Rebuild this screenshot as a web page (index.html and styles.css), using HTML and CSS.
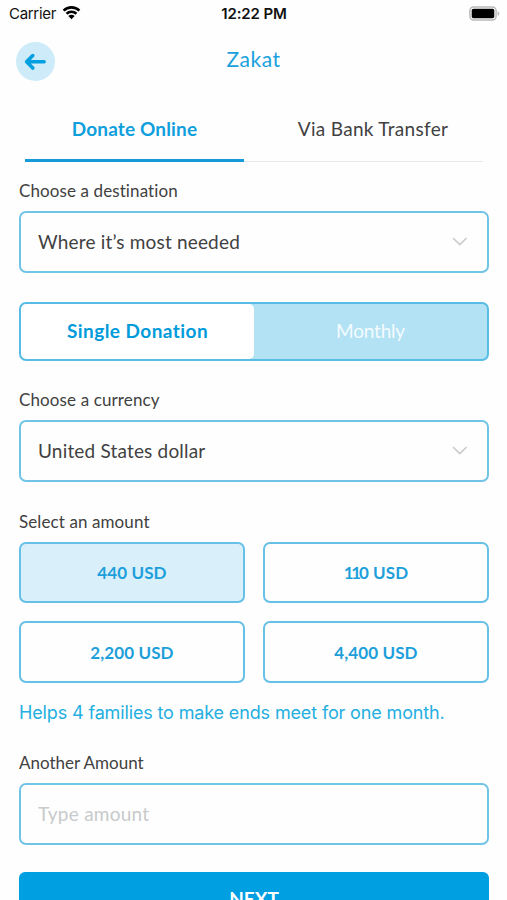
FILE: index.html
```html
<!DOCTYPE html>
<html lang="en">
<head>
<meta charset="utf-8">
<title>Zakat</title>
<link rel="stylesheet" href="styles.css">
</head>
<body>
<div class="screen">
  <div class="status">
    <div class="status-left">
      <span class="carrier">Carrier</span>
      <svg class="wifi" width="19" height="15" viewBox="0 0 20 15"><g fill="none" stroke="#000" stroke-width="2.7"><path d="M1.7 5.5a11.8 11.8 0 0 1 16.6 0"/><path d="M4.8 8.8a7.4 7.4 0 0 1 10.4 0"/></g><path d="M10 14.6 6.7 11.2a4.7 4.7 0 0 1 6.6 0Z"/></svg>
    </div>
    <span class="clock">12:22 PM</span>
    <svg class="battery" width="31" height="15" viewBox="0 0 31 15"><rect x=".9" y=".9" width="26.2" height="13.2" rx="3.8" fill="#fff" stroke="#b9b9b9" stroke-width="1.5"/><rect x="2.7" y="2.8" width="22.6" height="9.5" rx="1.8"/><path d="M28.7 5.2c2.2.8 2.2 3.800 0 4.600Z" fill="#b9b9b9"/></svg>
  </div>
  <header class="header">
    <button class="back" aria-label="Back"><svg width="39" height="39" viewBox="0 0 39 39"><path d="M10.900 19.800h17.200M16.800 13.600l-6.200 6.200 6.200 6.200" fill="none" stroke="#009fe0" stroke-width="3.600" stroke-linecap="round" stroke-linejoin="round"/></svg></button>
    <h1 class="title">Zakat</h1>
  </header>
  <nav class="tabs">
    <div class="tab tab-active"><span class="t-online">Donate Online</span></div>
    <div class="tab tab-other"><span class="t-bank">Via Bank Transfer</span></div>
  </nav>
  <div class="label l-dest">Choose a destination</div>
  <div class="field"><span class="v-dest">Where it’s most needed</span><svg class="chevron" width="16" height="10" viewBox="0 0 16 10"><path d="m1.500 1.500 6.300 6.200 6.300-6.200"/></svg></div>
  <div class="toggle">
    <div class="option option-active"><span class="t-single">Single Donation</span></div>
    <div class="option"><span class="t-monthly">Monthly</span></div>
  </div>
  <div class="label l-cur">Choose a currency</div>
  <div class="field"><span class="v-cur">United States dollar</span><svg class="chevron" width="16" height="10" viewBox="0 0 16 10"><path d="m1.500 1.500 6.300 6.200 6.300-6.200"/></svg></div>
  <div class="label l-amt">Select an amount</div>
  <div class="amounts">
    <div class="amount amount-active"><span>440 USD</span></div>
    <div class="amount"><span><span class="ones">11</span>0 USD</span></div>
    <div class="amount"><span>2,200 USD</span></div>
    <div class="amount"><span>4,400 USD</span></div>
  </div>
  <div class="hint"><span>Helps 4 families to make ends meet for one month.</span></div>
  <div class="label l-other">Another Amount</div>
  <div class="field input"><span class="v-type">Type amount</span></div>
  <div class="next"><span>NEXT</span></div>
</div>
</body>
</html>
```
FILE: styles.css
```css
* { box-sizing: border-box; }
html, body { margin: 0; height: 900px; overflow: hidden; background: #fefefe; }
.screen { width: 507px; height: 900px; overflow: hidden; padding: 0 18px 0 19px; font-family: Lato, "Open Sans", sans-serif; color: #414141; white-space: nowrap; font-variant-ligatures: none; }
.status { display: grid; grid-template-columns: 1fr auto 1fr; align-items: center; height: 28px; margin: 0 -12px 0 -10px; color: #111; font-family: Inter, sans-serif; font-size: 15px; }
.status-left { display: flex; align-items: center; gap: 6px; }
.carrier { letter-spacing: -0.3px; }
.carrier, .clock { margin-top: -2px; }
.wifi { margin-top: -3px; }
.clock { margin-right: 2px; font-weight: 600; letter-spacing: -.1px; }
.battery { justify-self: end; margin-right: 1px; margin-top: -2px; }
.header { display: grid; grid-template-columns: 39px 1fr 39px; height: 66px; padding-top: 14px; margin-left: -3px; margin-right: -2px; }
.back { width: 39px; height: 39px; padding: 0; border: 0; border-radius: 50%; background: #cdebf8; }
.back svg { display: block; }
.title { margin: 0; text-align: center; font-size: 21px; font-weight: 400; line-height: 34px; letter-spacing: .5px; color: #1aa1dc; }
.tabs { display: flex; width: 458px; height: 68px; margin-left: 6px; }
.tab { display: flex; justify-content: center; line-height: 69px; font-size: 19px; border-bottom: 1px solid #e5e7e9; height: 68px; }
.tab-active { width: 219px; border-bottom: 3px solid #159bd7; color: #0f9fdd; font-weight: 700; }
.tab-other { flex: 1; padding-left: 19px; }
.t-online { letter-spacing: .15px; }
.t-bank { letter-spacing: .3px; }
.label { font-size: 17px; line-height: 22px; }
.l-dest { margin-top: 18px; letter-spacing: .1px; }
.l-cur { margin-top: 28px; letter-spacing: .12px; }
.l-amt { margin-top: 29px; letter-spacing: .1px; }
.l-other { margin-top: 26px; letter-spacing: 0; }
.field { display: flex; justify-content: space-between; align-items: center; height: 62px; margin-top: 9px; padding: 0 19px 2px 16px; border: 2px solid #72c4e7; border-radius: 7px; font-size: 19px; }
.field span { margin-left: 1px; letter-spacing: .18px; }
.chevron { margin-top: 2px; fill: none; stroke: #ccc; stroke-width: 1.700; stroke-linecap: round; stroke-linejoin: round; }
.toggle { display: flex; height: 59px; margin-top: 29px; border: 2px solid #59bce5; border-radius: 7px; background: #b2e2f4; overflow: hidden; font-size: 19px; }
.option { flex: 1; display: flex; align-items: center; justify-content: center; padding-bottom: 2px; color: #f4fbfe; }
.option-active { border-radius: 5px; background: #fff; color: #009bdb; font-weight: 700; }
.t-single { letter-spacing: .45px; }
.t-monthly { letter-spacing: -.2px; }
.amounts { display: grid; grid-template-columns: 1fr 1fr; grid-template-rows: 61px 62px; column-gap: 18px; row-gap: 18px; margin-top: 9px; }
.amount { display: flex; align-items: center; justify-content: center; border: 2px solid #67c0e6; border-radius: 7px; color: #1d9fda; font-size: 17px; font-weight: 700; letter-spacing: .1px; }
.ones { letter-spacing: -2.300px; }
.amount-active { background: #d9f0fb; }
.hint { margin-top: 17px; line-height: 26px; font-family: Inter, sans-serif; font-size: 18px; letter-spacing: -.14px; color: #25aee0; }
.input { color: #c8cacb; }
.input span { letter-spacing: .25px; }
.next { display: flex; justify-content: center; height: 61px; margin-top: 27px; padding-top: 15px; border-radius: 6px 6px 0 0; background: #009fe1; color: #fff; font-size: 19px; line-height: 24px; font-weight: 700; }
```
